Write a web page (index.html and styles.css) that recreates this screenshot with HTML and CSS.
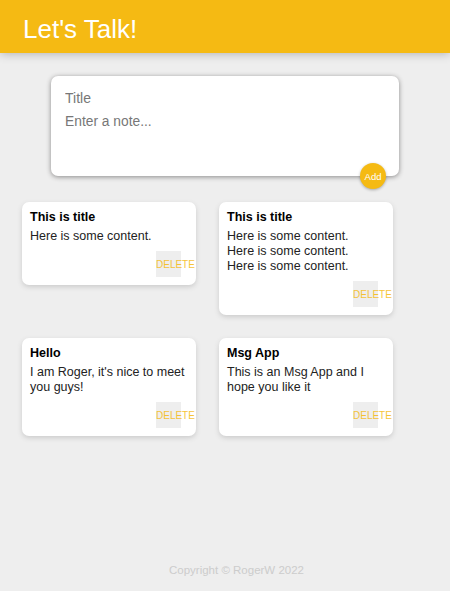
FILE: index.html
```html
<!DOCTYPE html>
<html lang="en">
<head>
<meta charset="utf-8">
<title>Let's Talk!</title>
<link rel="stylesheet" href="styles.css">
</head>
<body>
  <header class="app-header">
    <h1 class="app-title">Let's Talk!</h1>
  </header>

  <form class="create-note">
    <input class="note-input" name="title" placeholder="Title">
    <textarea class="note-textarea" name="content" placeholder="Enter a note..." rows="3"></textarea>
    <button type="button" class="add-btn">Add</button>
  </form>

  <main class="notes">
    <div class="note">
      <h2 class="note-title">This is title</h2>
      <p class="note-text">Here is some content.</p>
      <button class="delete-btn"><span>DELETE</span></button>
    </div>
    <div class="note">
      <h2 class="note-title">This is title</h2>
      <p class="note-text">Here is some content.
Here is some content.
Here is some content.</p>
      <button class="delete-btn"><span>DELETE</span></button>
    </div>
    <div class="note">
      <h2 class="note-title">Hello</h2>
      <p class="note-text">I am Roger, it's nice to meet you guys!</p>
      <button class="delete-btn"><span>DELETE</span></button>
    </div>
    <div class="note">
      <h2 class="note-title">Msg App</h2>
      <p class="note-text">This is an Msg App and I hope you like it</p>
      <button class="delete-btn"><span>DELETE</span></button>
    </div>
  </main>

  <footer class="app-footer">
    <p class="copyright">Copyright © RogerW 2022</p>
  </footer>
</body>
</html>
```

FILE: styles.css
```css
* {
  box-sizing: border-box;
}

html, body {
  margin: 0;
  padding: 0;
}

body {
  background: #eeeeee;
  font-family: "Liberation Sans", Arial, sans-serif;
  min-height: 591px;
  display: flex;
  flex-direction: column;
}

.app-header {
  background: #f5ba13;
  height: 53px;
  padding: 0 23px;
  display: flex;
  align-items: center;
  box-shadow: 0 0 10px 0 rgba(0, 0, 0, 0.3);
  position: relative;
  z-index: 1;
}

.app-title {
  margin: 0;
  padding-top: 4px;
  color: #ffffff;
  font-family: "Liberation Sans", Arial, sans-serif;
  font-weight: 400;
  font-size: 26px;
  line-height: 28px;
}

.create-note {
  position: relative;
  width: 348px;
  height: 100px;
  margin: 23px auto 26px;
  background: #ffffff;
  border-radius: 7px;
  box-shadow: 0 1px 5px rgb(138, 137, 137);
  padding: 11px 14px;
  display: flex;
  flex-direction: column;
}

.note-input,
.note-textarea {
  border: none;
  outline: none;
  padding: 4px 0;
  margin: 0;
  font-family: "Liberation Sans", Arial, sans-serif;
  color: #333;
  resize: none;
  background: transparent;
}

.note-input {
  font-size: 14px;
  line-height: 15px;
}

.note-textarea {
  font-size: 13.8px;
  line-height: 16px;
  height: 50px;
}

.note-input::placeholder,
.note-textarea::placeholder {
  color: #777777;
}

.add-btn {
  position: absolute;
  right: 13px;
  bottom: -13px;
  width: 26px;
  height: 26px;
  border-radius: 50%;
  border: none;
  padding: 0;
  background: #f5ba13;
  color: #ffffff;
  font-family: "Liberation Sans", Arial, sans-serif;
  font-size: 9.5px;
  box-shadow: 0 1px 3px rgba(0, 0, 0, 0.3);
}

.notes {
  display: grid;
  grid-template-columns: 174px 174px;
  column-gap: 23px;
  row-gap: 23px;
  align-items: start;
  padding-left: 22px;
}

.note {
  background: #ffffff;
  border-radius: 7px;
  box-shadow: 0 2px 5px #cccccc;
  padding: 8px 8px 8px;
  display: flow-root;
}

.note-title {
  margin: 0 0 4px;
  font-size: 12.5px;
  line-height: 15px;
  font-weight: 700;
  color: #000;
}

.note-text {
  margin: 0 0 7px;
  font-size: 12.5px;
  line-height: 15px;
  color: #222;
  white-space: pre-wrap;
  word-wrap: break-word;
}

.delete-btn {
  float: right;
  margin-right: 7px;
  width: 25px;
  height: 26px;
  padding: 0;
  border: none;
  background: #eeeeee;
  color: #f5ba13;
  font-family: "Liberation Sans", Arial, sans-serif;
  font-size: 10px;
  text-align: left;
  overflow: visible;
  display: flex;
  align-items: center;
  justify-content: flex-start;
}

.delete-btn span {
  white-space: nowrap;
  opacity: 0.85;
}

.app-footer {
  margin-top: auto;
  padding: 0 0 14px 23px;
  text-align: center;
}

.copyright {
  margin: 0;
  color: #cccccc;
  font-size: 11.5px;
  line-height: 14px;
}
```
